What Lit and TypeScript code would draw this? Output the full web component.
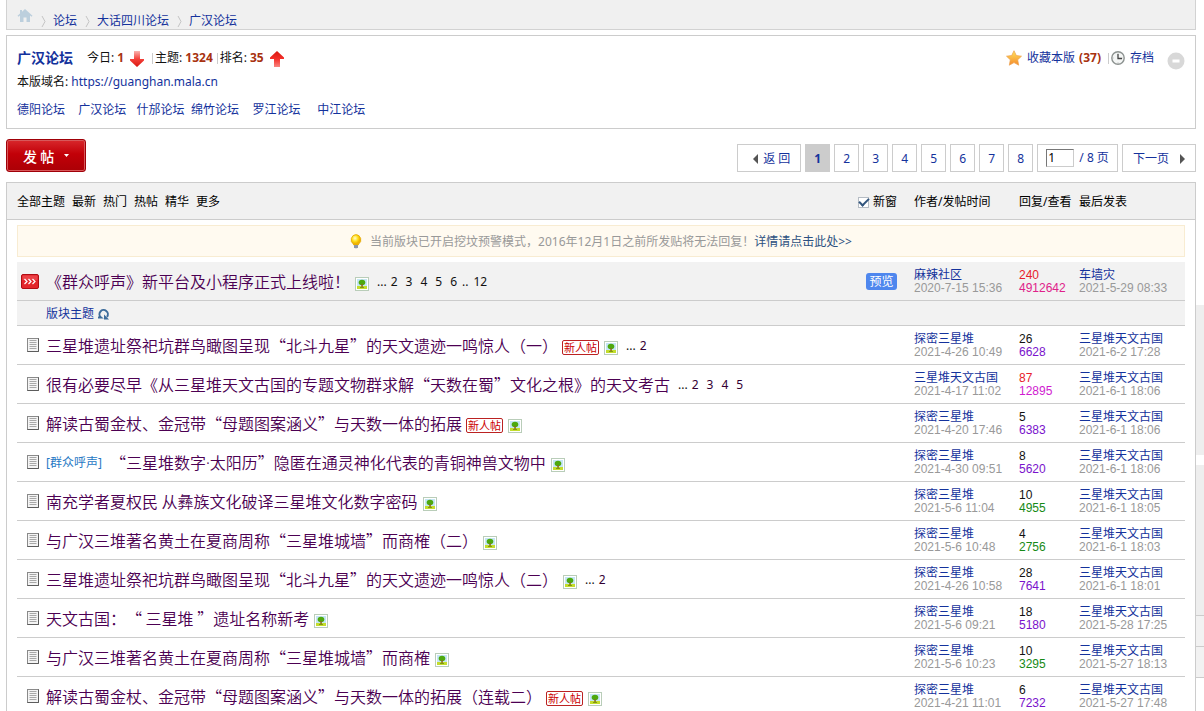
import { LitElement, html, css, svg, nothing } from "lit";
import { customElement, property } from "lit/decorators.js";

type Tone = "plain" | "red" | "pink" | "magenta" | "purple" | "green";

interface Thread {
  title: unknown;
  tag?: string;
  fresh?: boolean;
  picture?: boolean;
  pages?: string[];
  sticky?: boolean;
  author: string;
  posted: string;
  replies: string;
  repliesTone?: Tone;
  views: string;
  viewsTone: Tone;
  last: string;
  lastAt: string;
}

const HUNTER = "探密三星堆";
const ANCIENT = "三星堆天文古国";

const stickyThread: Thread = {
  title: "《群众呼声》新平台及小程序正式上线啦！", picture: true, sticky: true,
  pages: ["2", "3", "4", "5", "6", "..", "12"],
  author: "麻辣社区", posted: "2020-7-15 15:36", replies: "240", repliesTone: "red",
  views: "4912642", viewsTone: "pink", last: "车墙灾", lastAt: "2021-5-29 08:33",
};

const threads: Thread[] = [
  { title: "三星堆遗址祭祀坑群鸟瞰图呈现“北斗九星”的天文遗迹一鸣惊人（一）", fresh: true, picture: true, pages: ["2"], author: HUNTER, posted: "2021-4-26 10:49", replies: "26", views: "6628", viewsTone: "purple", last: ANCIENT, lastAt: "2021-6-2 17:28" },
  { title: "很有必要尽早《从三星堆天文古国的专题文物群求解“天数在蜀”文化之根》的天文考古", pages: ["2", "3", "4", "5"], author: ANCIENT, posted: "2021-4-17 11:02", replies: "87", repliesTone: "red", views: "12895", viewsTone: "magenta", last: ANCIENT, lastAt: "2021-6-1 18:06" },
  { title: "解读古蜀金杖、金冠带“母题图案涵义”与天数一体的拓展", fresh: true, picture: true, author: HUNTER, posted: "2021-4-20 17:46", replies: "5", views: "6383", viewsTone: "purple", last: ANCIENT, lastAt: "2021-6-1 18:06" },
  { title: html`“三星堆数字<span class="latin">·</span>太阳历”隐匿在通灵神化代表的青铜神兽文物中`, tag: "[群众呼声]", picture: true, author: HUNTER, posted: "2021-4-30 09:51", replies: "8", views: "5620", viewsTone: "purple", last: ANCIENT, lastAt: "2021-6-1 18:06" },
  { title: "南充学者夏权民 从彝族文化破译三星堆文化数字密码", picture: true, author: HUNTER, posted: "2021-5-6 11:04", replies: "10", views: "4955", viewsTone: "green", last: ANCIENT, lastAt: "2021-6-1 18:05" },
  { title: "与广汉三堆著名黄土在夏商周称“三星堆城墙”而商榷（二）", picture: true, author: HUNTER, posted: "2021-5-6 10:48", replies: "4", views: "2756", viewsTone: "green", last: ANCIENT, lastAt: "2021-6-1 18:03" },
  { title: "三星堆遗址祭祀坑群鸟瞰图呈现“北斗九星”的天文遗迹一鸣惊人（二）", picture: true, pages: ["2"], author: HUNTER, posted: "2021-4-26 10:58", replies: "28", views: "7641", viewsTone: "purple", last: ANCIENT, lastAt: "2021-6-1 18:01" },
  { title: "天文古国：“ 三星堆 ”遗址名称新考", picture: true, author: HUNTER, posted: "2021-5-6 09:21", replies: "18", views: "5180", viewsTone: "purple", last: ANCIENT, lastAt: "2021-5-28 17:25" },
  { title: "与广汉三堆著名黄土在夏商周称“三星堆城墙”而商榷", picture: true, author: HUNTER, posted: "2021-5-6 10:23", replies: "10", views: "3295", viewsTone: "green", last: ANCIENT, lastAt: "2021-5-27 18:13" },
  { title: "解读古蜀金杖、金冠带“母题图案涵义”与天数一体的拓展（连载二）", fresh: true, picture: true, author: HUNTER, posted: "2021-4-21 11:01", replies: "6", views: "7232", viewsTone: "purple", last: ANCIENT, lastAt: "2021-5-27 17:48" },
];

const icon = (w: number, h: number, body: unknown) =>
  html`<svg class="icon" width=${w} height=${h} viewBox="0 0 ${w} ${h}" aria-hidden="true">${body}</svg>`;

const homeIcon = icon(16, 13, svg`
  <path d="M8 0 L15.500 6.800 L14.500 7.800 L13 6.500 V13 H9.500 V8.500 H6.500 V13 H3 V6.500 L1.500 7.800 L0.500 6.800 L3 4.500 V1 H5 V2.700 Z" fill="#bccfdd"/>`);
const crumbIcon = icon(5, 11, svg`<path d="M1 0 L4 5.500 L1 11" fill="none" stroke="#c4c4c4"/>`);
const downIcon = icon(14, 16, svg`
  <defs><linearGradient id="down" x1="0" y1="0" x2="0" y2="1"><stop offset="0" stop-color="#f9b4b0"/><stop offset=".5" stop-color="#f5403a"/><stop offset="1" stop-color="#d81810"/></linearGradient></defs>
  <path d="M4 0 H10 V8 H14 V9.500 L7 16 L0 9.500 V8 H4 Z" fill="url(#down)"/>`);
const upIcon = icon(14, 16, svg`
  <defs><linearGradient id="up" x1="0" y1="0" x2="0" y2="1"><stop offset="0" stop-color="#d81810"/><stop offset=".5" stop-color="#f5302a"/><stop offset="1" stop-color="#f98680"/></linearGradient></defs>
  <path d="M7 0 L14 6.500 V8 H10 V16 H4 V8 H0 V6.500 Z" fill="url(#up)"/>`);
const starIcon = icon(16, 16, svg`
  <defs><linearGradient id="star" x1="0" y1="0" x2="0" y2="1"><stop offset="0" stop-color="#ffe45c"/><stop offset="1" stop-color="#f58a2c"/></linearGradient></defs>
  <path d="M8 .7 L10.300 5.500 L15.500 6.200 L11.700 9.800 L12.700 15.200 L8 12.600 L3.300 15.200 L4.300 9.800 L.5 6.200 L5.700 5.500 Z" fill="url(#star)" stroke="#eda04e" stroke-width=".7"/>`);
const clockIcon = icon(14, 14, svg`
  <circle cx="7" cy="7" r="6.200" fill="#f4f6f5" stroke="#8d9391" stroke-width="1.400"/>
  <path d="M7 3 V7.500 H11" fill="none" stroke="#444" stroke-width="1.300"/>
  <path d="M7 1.800V2.600M12.200 7H11.600M7 12.200V11.500M1.800 7H2.500" stroke="#999" stroke-width=".8"/>`);
const minusIcon = icon(18, 18, svg`<circle cx="9" cy="9" r="8.500" fill="#d8d8d8"/><rect x="5.500" y="7.500" width="7" height="3" fill="#fff"/>`);
const bulbIcon = icon(12, 15, svg`
  <defs><radialGradient id="bulb" cx=".4" cy=".35"><stop offset="0" stop-color="#fffbd0"/><stop offset=".6" stop-color="#ffe01c"/><stop offset="1" stop-color="#f0b400"/></radialGradient></defs>
  <path d="M6 .6 A5.200 5.200 0 0 1 8.700 10 L8.300 11 H3.700 L3.300 10 A5.200 5.200 0 0 1 6 .6Z" fill="url(#bulb)" stroke="#e3a90a" stroke-width=".8"/>
  <path d="M4 11 H8 V13.200 L7 14.300 H5 L4 13.200Z" fill="#8e96a8"/>`);
const treeIcon = icon(14, 14, svg`
  <rect x=".5" y=".5" width="13" height="13" fill="#fff" stroke="#b9cdb9"/>
  <rect x="2" y="2" width="10" height="7" fill="#c4e6f5"/><rect x="2" y="9" width="10" height="3" fill="#c3dd2c"/>
  <ellipse cx="7" cy="5.500" rx="3.300" ry="2.800" fill="#4da90e"/><rect x="6.300" y="7" width="1.500" height="3.500" fill="#8b6a20"/><path d="M5 10.500H9" stroke="#7f9a12"/>`);
const pageIcon = icon(12, 14, svg`
  <rect x=".5" y=".5" width="11" height="13" fill="#f4f4f4" stroke="#8a8a8a"/>
  <path d="M11.500 .5 V13.500 H.5" fill="none" stroke="#5c5c5c"/>
  <path d="M2.500 2.500H9.500M2.500 4.500H9.500M2.500 6.500H9.500M2.500 8.500H9.500M2.500 10.500H9.500" stroke="#a8a8a8"/>`);
const pinIcon = icon(18, 15, svg`
  <rect x=".5" y=".5" width="17" height="14" rx="1.500" fill="#e3262b" stroke="#b00d14"/>
  <path d="M1.500 1.500H16.500V6H1.500Z" fill="#f0555a" opacity=".6"/>
  <path d="M3.500 5L6 7.500L3.500 10M7.500 5L10 7.500L7.500 10M11.500 5L14 7.500L11.500 10" fill="none" stroke="#fff" stroke-width="1.200"/>`);
const reloadIcon = icon(12, 12, svg`
  <path d="M0 9.500 H3 A4.200 4.200 0 1 1 9 8.800" fill="none" stroke="#3d6c9b" stroke-width="2"/><path d="M6 6.500 V11.500 H11 Z" fill="#3d6c9b"/>`);
const leftIcon = icon(5, 10, svg`<path d="M5 0V10L0 5Z" fill="#555"/>`);
const rightIcon = icon(5, 10, svg`<path d="M0 0V10L5 5Z" fill="#555"/>`);
const caretIcon = icon(5, 3, svg`<path d="M0 0H5L2.500 3Z" fill="#fff"/>`);

const shared = css`
  * { box-sizing: border-box; }
  a { color: #14329c; text-decoration: none; }
  .icon { display: block; flex: none; }
`;

@customElement("forum-threads")
export class ForumThreads extends LitElement {
  @property({ attribute: false }) items: Thread[] = [];

  static styles = [shared, css`
    :host { display: block; padding: 0 10px; }
    table { width: 100%; border-collapse: separate; border-spacing: 0; table-layout: fixed; }
    td { padding: 0; height: 39px; border-bottom: 1px solid #ccc; vertical-align: middle; white-space: nowrap; }
    .shade { background: #f2f2f2; }
    .c-mark { width: 29px; }
    .c-author { width: 105px; }
    .c-count { width: 60px; }
    .c-last { width: 106px; }
    .mark .icon { margin: 0 7px 0 auto; }
    .subject { display: flex; align-items: center; gap: 4px; padding-right: 17px; }
    .title { font: 16px/24px "Noto Sans CJK SC", sans-serif; font-weight: 350; color: #4c0052; text-spacing-trim: space-all; }
    .latin { font-family: "Noto Sans", sans-serif; }
    .tag { color: #2678c4; margin: 2px 4px 0 0; }
    .low { margin: 6px 0 0 1px; }
    .fresh { margin-top: 4px; height: 15px; border: 1px solid #b22; border-radius: 2px; background: #fff; color: #c00; font-size: 11px; line-height: 13px; padding: 0 1px; }
    .pages { display: flex; margin: 2px 0 0 4px; }
    .pages a { color: #303; padding: 0 4px; }
    .shade .pages, .shade .pages a { color: #111; }
    .pages a.gap { padding: 0 1px; }
    .preview { margin-left: auto; border: 0; border-radius: 3px; background: #4f87ee; color: #fff; font: inherit; line-height: 17px; padding: 0 3px; height: 17px; width: 31px; }
    .info { padding-top: 1px; font: 12px/13px "Liberation Sans", "Noto Sans CJK SC", sans-serif; }
    .info a, .info span { display: block; }
    .date { color: #999; }
    .plain { color: #111; }
    .red { color: #e8202a; }
    .pink { color: #e0218a; }
    .magenta { color: #d01bd0; }
    .purple { color: #7a12cc; }
    .green { color: #168a16; }
    .section td { height: 25px; }
    .topic { display: flex; align-items: center; gap: 4px; padding-top: 1px; }
  `];

  private row(t: Thread) {
    return html`<tr class=${t.sticky ? "shade" : ""}>
      <td class="mark">${t.sticky ? pinIcon : pageIcon}</td>
      <td><div class="subject">
        ${t.tag ? html`<a class="tag" href="#">${t.tag}</a>` : nothing}
        <a class="title" href="#">${t.title}</a>
        ${t.fresh ? html`<span class="fresh">新人帖</span>` : nothing}
        ${t.picture ? html`<span class="low">${treeIcon}</span>` : nothing}
        ${t.pages ? html`<span class="pages">...${t.pages.map((p) => html`<a class=${p === ".." ? "gap" : ""} href="#">${p}</a>`)}</span>` : nothing}
        ${t.sticky ? html`<button class="preview" type="button">预览</button>` : nothing}
      </div></td>
      <td class="info"><a href="#">${t.author}</a><span class="date">${t.posted}</span></td>
      <td class="info"><span class=${t.repliesTone ?? "plain"}>${t.replies}</span><span class=${t.viewsTone}>${t.views}</span></td>
      <td class="info"><a href="#">${t.last}</a><span class="date">${t.lastAt}</span></td>
    </tr>`;
  }

  render() {
    return html`<table>
      <colgroup><col class="c-mark"><col><col class="c-author"><col class="c-count"><col class="c-last"></colgroup>
      <tbody>
        ${this.row(stickyThread)}
        <tr class="section shade"><td></td><td colspan="4"><a class="topic" href="#">版块主题 ${reloadIcon}</a></td></tr>
        ${this.items.map((t) => this.row(t))}
      </tbody>
    </table>`;
  }
}

@customElement("app-root")
export class AppRoot extends LitElement {
  static styles = [shared, css`
    :host { display: flex; height: 100vh; overflow: hidden; background: #fff; color: #111; font: 12px/18px "Noto Sans", "Noto Sans CJK SC", sans-serif; }
    main { flex: 1; min-width: 0; padding-left: 6px; }
    .rail { width: 8px; padding-top: 305px; flex: none; }
    .block { height: 150px; background: #eee; margin-bottom: 10px; }
    .tail { height: 31px; background: #f2f2f2; border-top: 1px solid #ccc; }
    .rail .block:nth-of-type(2) { margin-bottom: 0; }
    .tail:last-child { height: 32px; border-bottom: 1px solid #ccc; }
    .crumbs { display: flex; height: 30px; padding: 9px 10px 0; gap: 8px; background: #f0f0f0; border: 1px solid #d2d2d2; border-top: 0; align-items: flex-start; }
    .crumbs .step { display: flex; gap: 7px; align-items: center; line-height: 24px; }
    .board { margin-top: 5px; height: 94px; padding: 10px 10px; border: 1px solid #ccc; }
    .line { display: flex; align-items: center; height: 24px; }
    .name { margin: 0 14px 0 0; font-size: 14px; }
    .num { color: #a83210; margin: 0 2px 0 3px; }
    .line .icon { margin: 2px 6px 0 4px; }
    .bar { width: 1px; height: 11px; background: #ccc; margin: 0 2px; }
    .tools { display: flex; align-items: center; margin-left: auto; }
    .tools .icon { margin: 0 5px 0 0; }
    .tools .num { margin: 0 5px 0 4px; }
    .tools .fold { border: 0; padding: 0; background: none; margin: 6px 0 0 13px; }
    .tools .fold .icon { margin: 0; }
    .kin { height: 32px; font-family: "Liberation Sans", "Noto Sans CJK SC", sans-serif; white-space: pre; }
    .actions { display: flex; justify-content: space-between; height: 53px; padding-top: 10px; }
    .post { display: flex; align-items: center; gap: 10px; width: 80px; height: 33px; padding: 0 0 0 16px; border: 1px solid #a00008; border-radius: 3px; background: linear-gradient(#d8282c, #c20008 45%, #ab0006); box-shadow: inset 0 0 0 1px #d8585a; color: #fff; font: 500 14px/20px "Noto Sans CJK SC", sans-serif; white-space: nowrap; }
    .pager { display: flex; gap: 4px; padding-top: 5px; }
    .pager a, .jump { display: flex; align-items: center; justify-content: center; height: 28px; min-width: 25px; padding-top: 1px; border: 1px solid #ccc; color: #14329c; white-space: pre; }
    .pager .now { background: #ccc; font-weight: bold; }
    .pager .wide { padding: 1px 10px 0; gap: 8px; }
    .pager .back { padding: 1px 10px 0 15px; gap: 5px; }
    .pager .jump { padding: 0 8px; gap: 5px; }
    .jump input { width: 28px; height: 18px; border: 1px solid #ccc; border-top-color: #777; border-left-color: #777; border-radius: 0; padding: 0 0 0 1px; font: inherit; }
    .panel { border: 1px solid #ccc; }
    .head { display: grid; grid-template-columns: minmax(0, 1fr) 105px 60px 106px; align-items: center; height: 37px; padding: 2px 10px 0; background: #f1f1f1; border-bottom: 1px solid #ccc; color: #000; white-space: nowrap; }
    .filters { display: flex; align-items: center; gap: 7px; padding-right: 17px; }
    .filters a { color: #000; }
    .filters label { margin-left: auto; display: flex; align-items: center; gap: 4px; }
    .tick { appearance: none; width: 11px; height: 11px; margin: 0; border: 1px solid #b5bcc4; background: #fff; display: grid; place-items: center; }
    .tick:checked::after { content: ""; width: 8px; height: 4px; border: solid #33567e; border-width: 0 0 2px 2px; transform: rotate(-45deg); margin-bottom: 3px; }
    .notice { display: flex; justify-content: center; align-items: center; gap: 8px; margin: 5px 10px; height: 32px; padding-top: 2px; background: #fffaf0; border: 1px solid #f8ecd2; color: #999; text-spacing-trim: space-all; }
    .notice .icon { margin-bottom: 2px; }
    .notice a { color: #2c5080; }
  `];

  render() {
    const boards = ["德阳论坛", "广汉论坛", "什邡论坛", "绵竹论坛", "罗江论坛", "中江论坛"];
    const gaps = [4, 3, 2, 4, 5, 0];
    return html`
      <main>
        <nav class="crumbs" aria-label="位置">
          <a href="#" aria-label="首页">${homeIcon}</a>
          ${["论坛", "大话四川论坛", "广汉论坛"].map((c) => html`<span class="step">${crumbIcon}<a href="#">${c}</a></span>`)}
        </nav>
        <section class="board">
          <div class="line">
            <h1 class="name"><a href="#">广汉论坛</a></h1>
            今日:<b class="num">1</b>${downIcon}<span class="bar"></span>主题:<b class="num">1324</b><span class="bar"></span>排名:<b class="num">35</b>${upIcon}
            <div class="tools">
              ${starIcon}<a href="#">收藏本版</a><b class="num">(37)</b><span class="bar"></span>${clockIcon}<a href="#">存档</a>
              <button class="fold" type="button" aria-label="收起">${minusIcon}</button>
            </div>
          </div>
          <div class="line">本版域名:&nbsp;<a href="#">https://guanghan.mala.cn</a></div>
          <div class="line kin">${boards.map((b, i) => html`<a href="#">${b}</a>${"\u00a0".repeat(gaps[i])}`)}</div>
        </section>
        <div class="actions">
          <button class="post" type="button">发 帖 ${caretIcon}</button>
          <nav class="pager" aria-label="分页">
            <a class="back" href="#">${leftIcon}返 回</a>
            <a class="now" href="#">1</a>
            ${["2", "3", "4", "5", "6", "7", "8"].map((p) => html`<a href="#">${p}</a>`)}
            <label class="jump"><input type="text" .value=${"1"} aria-label="页码"><span>/ 8 页</span></label>
            <a class="wide" href="#">下一页 ${rightIcon}</a>
          </nav>
        </div>
        <section class="panel">
          <div class="head">
            <div class="filters">
              ${["全部主题", "最新", "热门", "热帖", "精华", "更多"].map((f) => html`<a href="#">${f}</a>`)}
              <label><input class="tick" type="checkbox" checked>新窗</label>
            </div>
            <span>作者/发帖时间</span><span>回复/查看</span><span>最后发表</span>
          </div>
          <div class="notice">${bulbIcon}<span>当前版块已开启挖坟预警模式，2016年12月1日之前所发贴将无法回复！<a href="#">详情请点击此处&gt;&gt;</a></span></div>
          <forum-threads .items=${threads}></forum-threads>
        </section>
      </main>
      <aside class="rail"><div class="block"></div><div class="block"></div><div class="tail"></div><div class="tail"></div></aside>`;
  }
}
